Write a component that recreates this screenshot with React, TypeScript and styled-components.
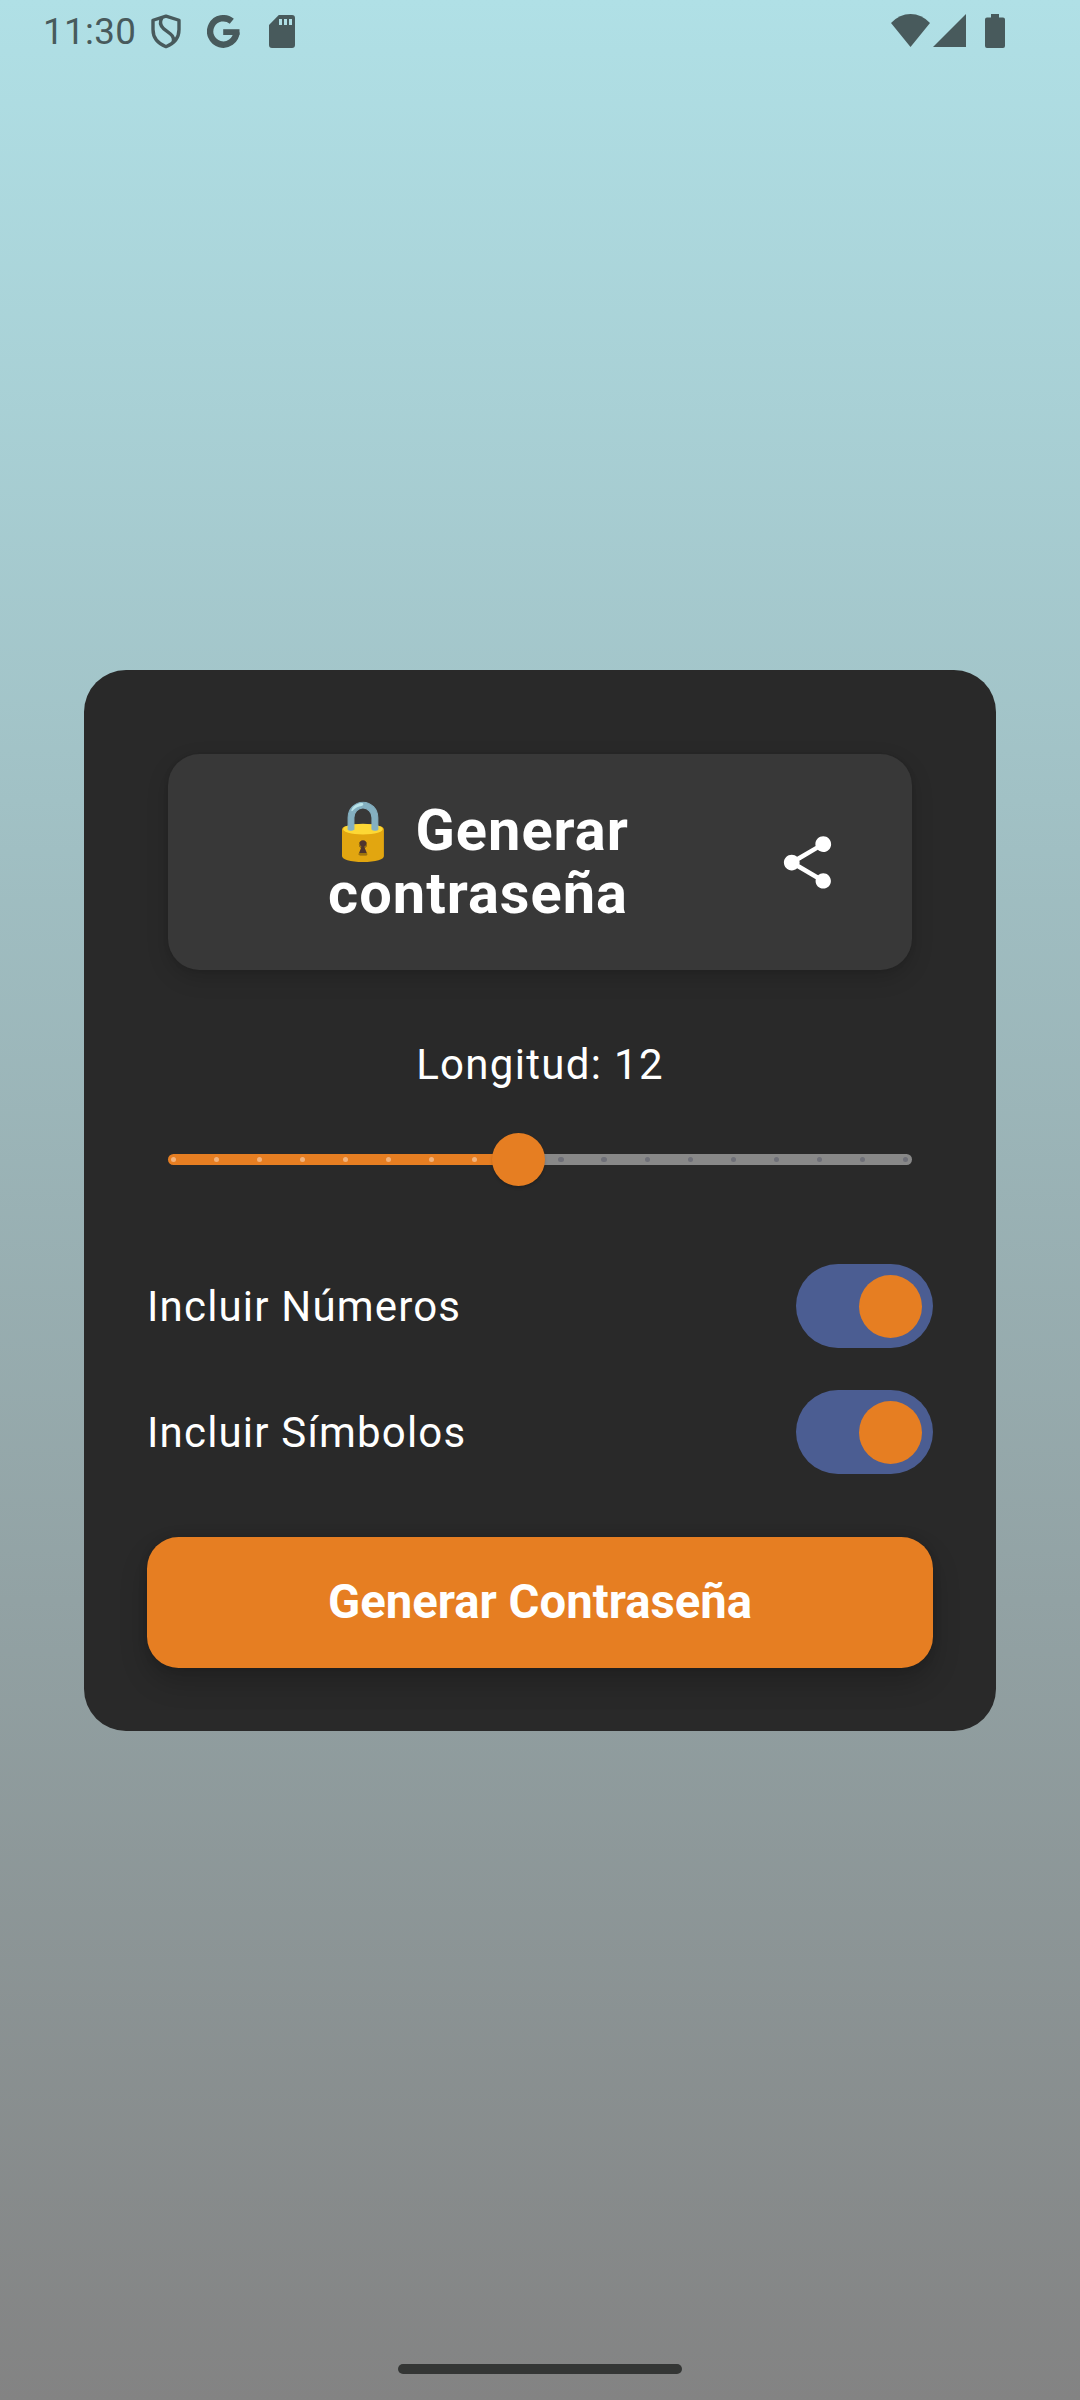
import React, { useState } from "react";
import styled, { createGlobalStyle } from "styled-components";

const ORANGE = "#e67e22";
const STATUS = "#485a5c";

const GlobalStyle = createGlobalStyle`
  *, *::before, *::after { box-sizing: border-box; }
  body { margin: 0; font-family: Roboto, "Liberation Sans", sans-serif; }
  button { font: inherit; border: 0; padding: 0; cursor: pointer; }
`;

const Screen = styled.div`
  width: 1080px;
  height: 2400px;
  display: flex;
  flex-direction: column;
  background: linear-gradient(180deg, #b0e0e6 0%, #838383 100%);
  overflow: hidden;
`;

const StatusBar = styled.header`
  height: 63px;
  flex: none;
  display: flex;
  justify-content: space-between;
  padding: 0 75px 0 43px;
  color: ${STATUS};
`;

const StatusGroup = styled.div`
  display: flex;
  align-items: center;
  gap: 26px;
  svg { display: block; fill: currentColor; }
`;

const NotificationGroup = styled(StatusGroup)`
  svg:last-child { margin-left: 3px; }
`;

const SystemGroup = styled(StatusGroup)`
  align-items: flex-start;
  gap: 3px;
  padding-top: 14px;
  svg:last-child { margin-left: 16px; }
`;

const Clock = styled.span`
  font-size: 36.75px;
  line-height: 63px;
  letter-spacing: 0.35px;
  margin-right: -11.2px;
`;

const Main = styled.main`
  flex: 1;
  padding: 607px 84px 0;
`;

const Card = styled.section`
  height: 1061px;
  padding: 84px 63px 63px;
  border-radius: 42px;
  background: #292929;
  color: #fff;
  display: flex;
  flex-direction: column;
`;

const TitlePanel = styled.div`
  height: 216px;
  margin: 0 21px;
  padding: 0 42px;
  border-radius: 31.5px;
  background: #383838;
  display: flex;
  align-items: center;
  box-shadow: 0 8px 22px rgba(0, 0, 0, 0.16), 0 0 5px rgba(0, 0, 0, 0.1);
`;

const Title = styled.h1`
  flex: 1;
  margin: 0;
  padding-left: 2px;
  font-size: 57.75px;
  font-weight: 700;
  line-height: 63px;
  letter-spacing: 1px;
  text-align: center;
`;

const ShareButton = styled.button`
  width: 126px;
  height: 126px;
  flex: none;
  display: grid;
  place-items: center;
  color: inherit;
  background: none;
  svg { fill: currentColor; }
`;

const Label = styled.span`
  font-size: 42px;
  line-height: 63px;
  letter-spacing: 1.18px;
`;

const LengthLabel = styled(Label)`
  margin-top: 63px;
  letter-spacing: 1.3125px;
  text-align: center;
`;

const Slider = styled.div`
  height: 53px;
  margin: 37px 21.5px 0 20.5px;
  display: grid;
  align-items: center;
  > * { grid-area: 1 / 1; }
`;

const Track = styled.div`
  height: 10.5px;
  padding: 0 3px;
  border-radius: 6px;
  background: linear-gradient(90deg, ${ORANGE} 350px, #888 350px);
  display: flex;
  align-items: center;
  justify-content: space-between;
`;

const Tick = styled.i<{ $active: boolean }>`
  width: 5.25px;
  height: 5.25px;
  border-radius: 50%;
  background: ${(p) => (p.$active ? "#f2b27b" : "#6e6f77")};
`;

const Thumb = styled.div`
  width: 53px;
  height: 53px;
  border-radius: 50%;
  background: ${ORANGE};
  box-shadow: 0 2px 3px rgba(0, 0, 0, 0.18);
`;

const Options = styled.div`
  margin-top: 78px;
  display: flex;
  flex-direction: column;
  gap: 42px;
`;

const Option = styled.div`
  height: 84px;
  display: flex;
  align-items: center;
  justify-content: space-between;
`;

const Switch = styled.button<{ $on: boolean }>`
  width: 137px;
  height: 84px;
  padding: 0 11px;
  border-radius: 42px;
  background: ${(p) => (p.$on ? "#4b5d92" : "#888")};
  display: flex;
  align-items: center;
  justify-content: ${(p) => (p.$on ? "flex-end" : "flex-start")};
`;

const Knob = styled.span`
  width: 63px;
  height: 63px;
  border-radius: 50%;
  background: ${ORANGE};
`;

const Generate = styled.button`
  height: 131px;
  flex: none;
  margin-top: 63px;
  padding-bottom: 2px;
  border-radius: 31.5px;
  background: ${ORANGE};
  color: #fff;
  font-size: 47.25px;
  font-weight: 700;
  box-shadow: 0 14px 28px rgba(0, 0, 0, 0.2), 0 0 8px rgba(0, 0, 0, 0.14);
`;

const NavBar = styled.footer`
  height: 36px;
  flex: none;
  display: flex;
  justify-content: center;
`;

const Handle = styled.div`
  width: 284px;
  height: 10px;
  border-radius: 5px;
  background: #343635;
`;

const ShieldIcon = () => (
  <svg width="30" height="35" viewBox="0 0 30 36" preserveAspectRatio="none">
    <g style={{ fill: "none" }} stroke="currentColor" strokeWidth="3.4" strokeLinejoin="round">
      <path d="M15 2.2 28 6.4V16c0 8.6-5.6 14.7-13 17.6C7.600 30.7 2 24.600 2 16V6.400Z" />
      <path d="M11 3.800C8.500 8 8.800 11.500 12.500 15l7 5.500c3.600 3 3.700 5.500 2.500 9" />
    </g>
  </svg>
);

const GoogleIcon = () => (
  <svg width="33" height="33" viewBox="0 0 33 33">
    <path
      style={{ fill: "none" }}
      stroke="currentColor"
      strokeWidth="6.400"
      d="M24.800 6.300A13.200 13.200 0 1 0 29.500 17.300"
    />
    <path d="M16.200 14.200H32.500V20H16.200Z" />
  </svg>
);

const SdIcon = () => (
  <svg width="26" height="33" viewBox="0 0 26 33">
    <path
      fillRule="evenodd"
      d="M9.800 0H23q3 0 3 3v27q0 3-3 3H3q-3 0-3-3V10ZM10 4v6h3V4ZM15 4v6h3V4ZM20 4v6h3V4Z"
    />
  </svg>
);

const WifiIcon = () => (
  <svg width="39" height="33" viewBox="0 0 39 33">
    <path d="M0 9Q8.500 0 19.500 0T39 9L19.500 33Z" />
  </svg>
);

const SignalIcon = () => (
  <svg width="33" height="33" viewBox="0 0 33 33">
    <path d="M33 0v33H0Z" />
  </svg>
);

const BatteryIcon = () => (
  <svg width="20" height="34" viewBox="0 0 20 34">
    <path d="M6 0h8v3.500h4q2 0 2 2V32q0 2-2 2H2q-2 0-2-2V5.500q0-2 2-2h4Z" />
  </svg>
);

const ShareIcon = () => (
  <svg width="63" height="63" viewBox="0 0 24 24">
    <path d="M18 16.080c-.76 0-1.440.3-1.960.77L8.910 12.700c.05-.23.09-.46.09-.7s-.04-.47-.09-.7l7.050-4.110c.54.5 1.250.81 2.040.81 1.660 0 3-1.340 3-3s-1.340-3-3-3-3 1.340-3 3c0 .24.04.47.09.7L8.040 9.810C7.500 9.310 6.790 9 6 9c-1.660 0-3 1.340-3 3s1.340 3 3 3c.79 0 1.500-.31 2.040-.81l7.120 4.160c-.05.21-.08.43-.08.65 0 1.610 1.310 2.920 2.920 2.920s2.920-1.310 2.920-2.920-1.310-2.920-2.920-2.920z" />
  </svg>
);

const MIN = 4;
const MAX = 21;
const STEPS = Array.from({ length: MAX - MIN + 1 }, (_, i) => MIN + i);

export default function App() {
  const [length] = useState(12);
  const [numbers, setNumbers] = useState(true);
  const [symbols, setSymbols] = useState(true);
  const offset = 6 + ((length - MIN) / (MAX - MIN)) * 732.75 - 26.5;

  return (
    <>
      <GlobalStyle />
      <Screen>
        <StatusBar>
          <NotificationGroup>
            <Clock>11:30</Clock>
            <ShieldIcon />
            <GoogleIcon />
            <SdIcon />
          </NotificationGroup>
          <SystemGroup>
            <WifiIcon />
            <SignalIcon />
            <BatteryIcon />
          </SystemGroup>
        </StatusBar>
        <Main>
          <Card>
            <TitlePanel>
              <Title>🔒 Generar contraseña</Title>
              <ShareButton aria-label="Compartir">
                <ShareIcon />
              </ShareButton>
            </TitlePanel>
            <LengthLabel>Longitud: {length}</LengthLabel>
            <Slider>
              <Track>
                {STEPS.map((s) => (
                  <Tick key={s} $active={s <= length} />
                ))}
              </Track>
              <Thumb style={{ marginLeft: offset }} />
            </Slider>
            <Options>
              <Option>
                <Label>Incluir Números</Label>
                <Switch $on={numbers} onClick={() => setNumbers(!numbers)}>
                  <Knob />
                </Switch>
              </Option>
              <Option>
                <Label>Incluir Símbolos</Label>
                <Switch $on={symbols} onClick={() => setSymbols(!symbols)}>
                  <Knob />
                </Switch>
              </Option>
            </Options>
            <Generate>Generar Contraseña</Generate>
          </Card>
        </Main>
        <NavBar>
          <Handle />
        </NavBar>
      </Screen>
    </>
  );
}
